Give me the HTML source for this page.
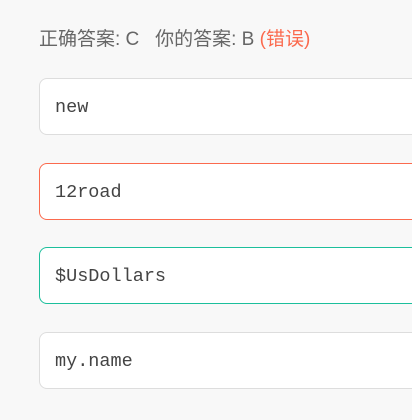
<!DOCTYPE html>
<html><head><meta charset="utf-8"><style>
body{margin:0;background:#f8f8f8;width:412px;height:420px;overflow:hidden;position:relative;font-family:"Liberation Sans","Noto Sans CJK SC",sans-serif}
.h{position:absolute;left:39px;top:24px;font-size:19px;color:#666;white-space:nowrap}
.h span{color:#fb6a4e}
.b{position:absolute;left:39px;width:400px;height:55px;background:#fff;border:1px solid #ddd;border-radius:8px;box-sizing:content-box;font-family:"Liberation Mono",monospace;font-size:18.5px;color:#444;line-height:57px;padding-left:15px}
</style></head><body>
<div class="h">正确答案: C&nbsp;&nbsp;&nbsp;你的答案: B <span>(错误)</span></div>
<div class="b" style="top:78px">new</div>
<div class="b" style="top:163px;border-color:#fb6a4e">12road</div>
<div class="b" style="top:247px;border-color:#1cbf9c">$UsDollars</div>
<div class="b" style="top:332px">my.name</div>
</body></html>
